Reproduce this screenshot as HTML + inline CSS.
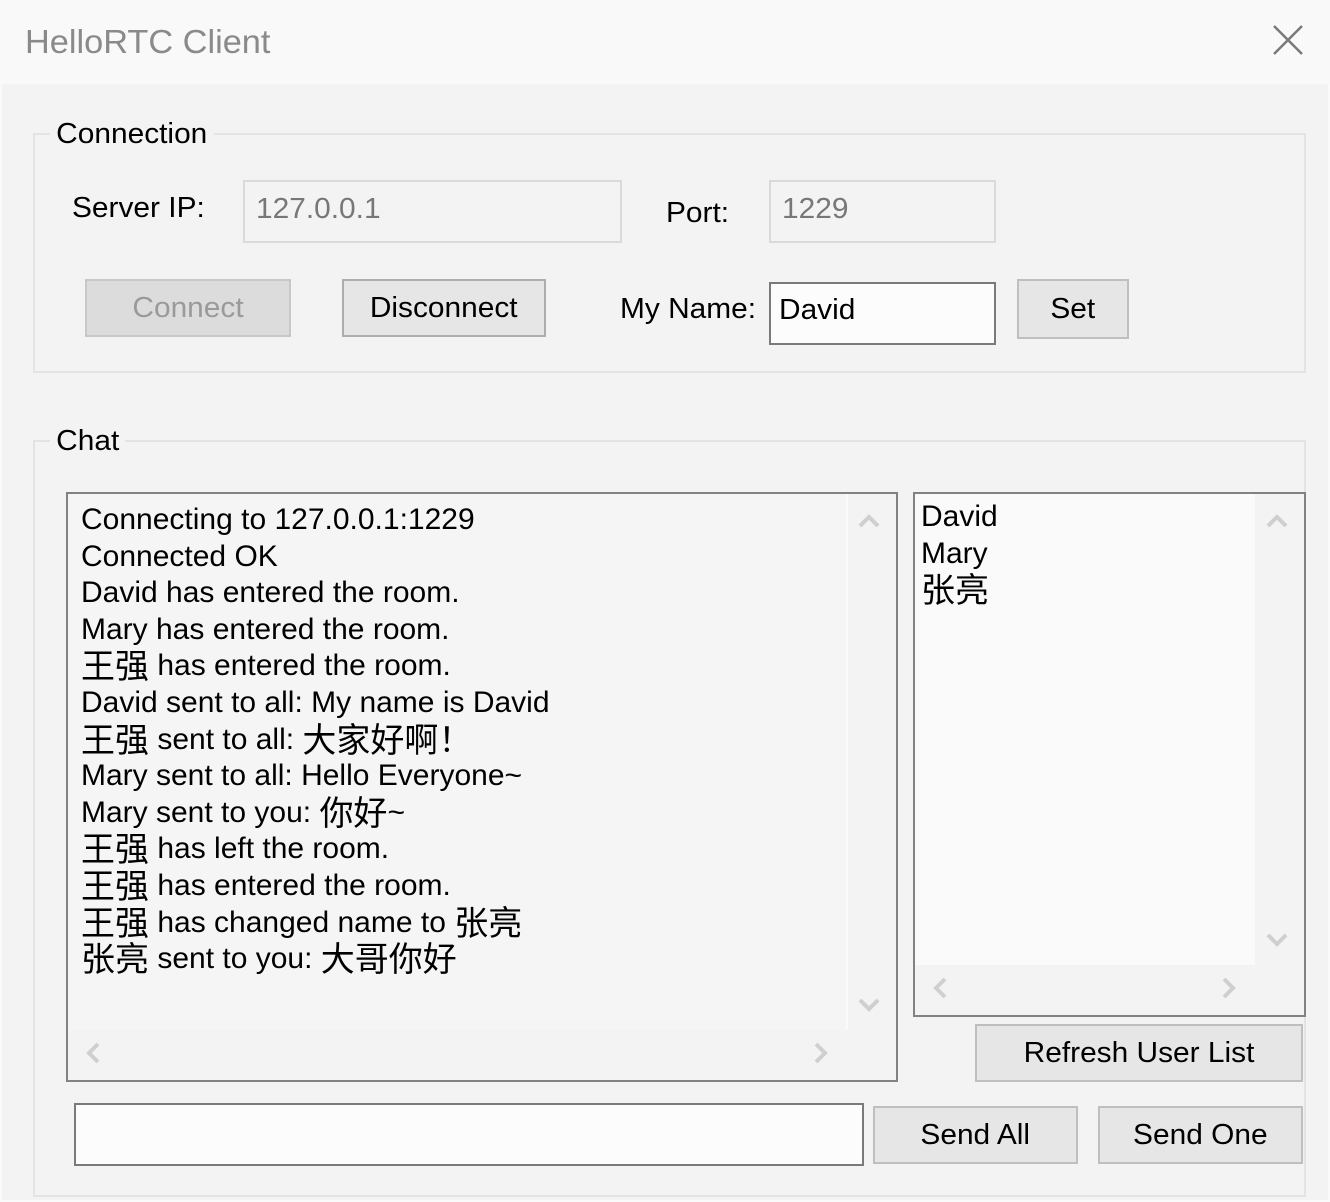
<!DOCTYPE html>
<html><head><meta charset="utf-8"><style>
*{margin:0;padding:0;box-sizing:border-box}
body{width:1330px;height:1202px;background:#f0f0f0;font-family:"Liberation Sans","Noto Sans CJK SC",sans-serif;color:#000;position:relative;overflow:hidden}
.a{position:absolute}
.win{left:0;top:0;width:1330px;height:1202px;background:#f3f3f3;border:2px solid #fafafa}
.title{left:0;top:0;width:1330px;height:84px;background:#f9f9f9}
.t{white-space:nowrap;transform-origin:0 50%;transform:scaleX(1.03);line-height:1}
.grp{border:2px solid #e3e3e3}
.lbl{background:#f3f3f3;padding:0 6px;font-size:29px}
.inp{border:2px solid #dadada;background:#f3f3f3}
.btn{background:#e6e6e6;border:2px solid #bfbfbf;display:flex;align-items:center;justify-content:center;font-size:29px}
.btn span{display:inline-block;transform:scaleX(1.03);white-space:nowrap}
.chat .l{height:36.6px;line-height:36.6px;font-size:30px;white-space:nowrap}
.c{font-size:34px;line-height:0;position:relative;top:3px;font-family:"Noto Sans CJK SC","WenQuanYi Zen Hei",sans-serif}
</style></head><body>
<div class="a win"></div>
<div class="a title"></div>
<div class="a t" style="left:25px;top:25px;font-size:33px;color:#8a8a8a;transform:scaleX(1.04)">HelloRTC Client</div>
<svg class="a" style="left:1272px;top:24px" width="32" height="32"><path d="M2 2L30 30M30 2L2 30" stroke="#7a7a7a" stroke-width="2.5"/></svg>

<div class="a grp" style="left:33px;top:133px;width:1273px;height:240px"></div>
<div class="a lbl t" style="left:50px;top:120px">Connection</div>
<div class="a t" style="left:72px;top:194px;font-size:29px">Server IP:</div>
<div class="a inp" style="left:243px;top:180px;width:379px;height:63px"></div>
<div class="a t" style="left:256px;top:195px;font-size:29px;color:#777">127.0.0.1</div>
<div class="a t" style="left:666px;top:199px;font-size:29px">Port:</div>
<div class="a inp" style="left:769px;top:180px;width:227px;height:63px"></div>
<div class="a t" style="left:782px;top:195px;font-size:29px;color:#777">1229</div>
<div class="a btn" style="left:85px;top:279px;width:206px;height:58px;background:#dcdcdc;border-color:#c8c8c8;color:#9a9a9a"><span>Connect</span></div>
<div class="a btn" style="left:342px;top:279px;width:204px;height:58px;border-color:#adadad"><span>Disconnect</span></div>
<div class="a t" style="left:620px;top:295px;font-size:29px">My Name:</div>
<div class="a" style="left:769px;top:282px;width:227px;height:63px;background:#fcfcfc;border:2px solid #7a7a7a"></div>
<div class="a t" style="left:779px;top:296px;font-size:29px">David</div>
<div class="a btn" style="left:1017px;top:279px;width:112px;height:60px"><span>Set</span></div>

<div class="a grp" style="left:33px;top:440px;width:1273px;height:757px"></div>
<div class="a lbl t" style="left:50px;top:427px">Chat</div>

<div class="a" style="left:66px;top:492px;width:832px;height:590px;border:2px solid #828282;background:#f3f3f3"></div>
<div class="a" style="left:68px;top:494px;width:778px;height:536px;background:#f5f5f5"></div>
<div class="a" style="left:846px;top:494px;width:2px;height:536px;background:#fafafa"></div>
<svg class="a" style="left:858px;top:514px" width="22" height="14"><path d="M2 12L11 3L20 12" stroke="#cfcfcf" stroke-width="4" fill="none"/></svg>
<svg class="a" style="left:858px;top:998px" width="22" height="14"><path d="M2 2L11 11L20 2" stroke="#cfcfcf" stroke-width="4" fill="none"/></svg>
<svg class="a" style="left:86px;top:1042px" width="14" height="22"><path d="M12 2L3 11L12 20" stroke="#cfcfcf" stroke-width="4" fill="none"/></svg>
<svg class="a" style="left:814px;top:1042px" width="14" height="22"><path d="M2 2L11 11L2 20" stroke="#cfcfcf" stroke-width="4" fill="none"/></svg>

<div class="a chat" style="left:81px;top:502px">
<div class="l">Connecting to 127.0.0.1:1229</div>
<div class="l">Connected OK</div>
<div class="l">David has entered the room.</div>
<div class="l">Mary has entered the room.</div>
<div class="l"><span class="c">王强</span> has entered the room.</div>
<div class="l">David sent to all: My name is David</div>
<div class="l"><span class="c">王强</span> sent to all: <span class="c">大家好啊！</span></div>
<div class="l">Mary sent to all: Hello Everyone~</div>
<div class="l">Mary sent to you: <span class="c">你好</span>~</div>
<div class="l"><span class="c">王强</span> has left the room.</div>
<div class="l"><span class="c">王强</span> has entered the room.</div>
<div class="l"><span class="c">王强</span> has changed name to <span class="c">张亮</span></div>
<div class="l"><span class="c">张亮</span> sent to you: <span class="c">大哥你好</span></div>
</div>

<div class="a" style="left:913px;top:492px;width:393px;height:525px;border:2px solid #828282;background:#f3f3f3"></div>
<div class="a" style="left:915px;top:494px;width:340px;height:471px;background:#fafafa"></div>
<svg class="a" style="left:1266px;top:514px" width="22" height="14"><path d="M2 12L11 3L20 12" stroke="#cfcfcf" stroke-width="4" fill="none"/></svg>
<svg class="a" style="left:1266px;top:933px" width="22" height="14"><path d="M2 2L11 11L20 2" stroke="#cfcfcf" stroke-width="4" fill="none"/></svg>
<svg class="a" style="left:933px;top:977px" width="14" height="22"><path d="M12 2L3 11L12 20" stroke="#cfcfcf" stroke-width="4" fill="none"/></svg>
<svg class="a" style="left:1222px;top:977px" width="14" height="22"><path d="M2 2L11 11L2 20" stroke="#cfcfcf" stroke-width="4" fill="none"/></svg>
<div class="a chat" style="left:921px;top:499px">
<div class="l">David</div>
<div class="l">Mary</div>
<div class="l"><span class="c">张亮</span></div>
</div>

<div class="a btn" style="left:975px;top:1024px;width:328px;height:58px"><span>Refresh User List</span></div>
<div class="a" style="left:74px;top:1103px;width:790px;height:63px;background:#fcfcfc;border:2px solid #7a7a7a"></div>
<div class="a btn" style="left:873px;top:1106px;width:205px;height:58px"><span>Send All</span></div>
<div class="a btn" style="left:1098px;top:1106px;width:205px;height:58px"><span>Send One</span></div>
</body></html>
